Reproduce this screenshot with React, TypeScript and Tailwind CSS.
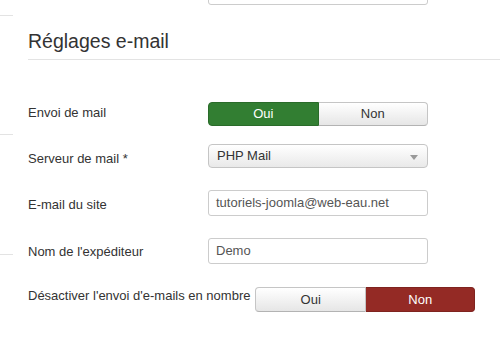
import React from "react";

const font = { fontFamily: '"Liberation Sans", Arial, sans-serif' };

function Toggle({ value }: { value: "oui" | "non" }) {
  const base = "flex-1 flex items-center justify-center text-[13px] border";
  const idle =
    "bg-gradient-to-b from-white to-[#e6e6e6] text-[#333] border-[#c5c5c5] border-b-[#b3b3b3]";
  return (
    <div className="flex w-[220px] h-[24px]">
      <div
        className={`${base} rounded-l-[4px] ${
          value === "oui" ? "bg-[#327e32] text-white border-[#2a6b2a]" : idle
        }`}
      >
        Oui
      </div>
      <div
        className={`${base} rounded-r-[4px] border-l-0 ${
          value === "non" ? "bg-[#942a25] text-white border-[#7f231f]" : idle
        }`}
      >
        Non
      </div>
    </div>
  );
}

function Row({
  label,
  pt,
  children,
}: {
  label: string;
  pt: string;
  children: React.ReactNode;
}) {
  return (
    <div className="flex items-start">
      <label className={`min-w-[175px] mr-[5px] whitespace-nowrap text-[13px] leading-[18px] text-[#333] ${pt}`}>
        {label}
      </label>
      {children}
    </div>
  );
}

export default function App() {
  return (
    <div className="w-[500px] h-[350px] bg-white overflow-hidden flex" style={font}>
      {/* sidebar edge fragments */}
      <div className="w-[14px] shrink-0 flex flex-col">
        <div className="mt-[15px] h-px bg-[#e3e3e3] w-[13px]" />
        <div className="mt-[118px] h-px bg-[#e3e3e3] w-[13px]" />
        <div className="mt-[119px] h-px bg-[#e3e3e3] w-[13px]" />
      </div>

      <div className="flex-1 pl-[14px] flex flex-col">
        {/* bottom of previous field */}
        <div className="ml-[180px] -mt-[21px] w-[220px] h-[26px] border border-[#ccc] rounded-[3px] bg-white" />

        <h2 className="mt-[22px] text-[19.5px] leading-[28px] text-[#333] border-b border-[#e3e3e3] pb-[4px]">
          Réglages e-mail
        </h2>

        <div className="mt-[42px] flex flex-col">
          <Row label="Envoi de mail" pt="pt-[2px]">
            <Toggle value="oui" />
          </Row>

          <div className="mt-[18px]">
            <Row label="Serveur de mail *" pt="pt-[6px]">
              <div className="relative w-[220px] h-[24px] border border-[#c5c5c5] rounded-[4px] bg-gradient-to-b from-white to-[#e9e9e9] flex items-center pl-[8px] text-[13px] text-[#333]">
                PHP Mail
                <span className="absolute right-[9px] top-[10px] w-0 h-0 border-l-[4px] border-r-[4px] border-t-[5px] border-l-transparent border-r-transparent border-t-[#999]" />
              </div>
            </Row>
          </div>

          <div className="mt-[22px]">
            <Row label="E-mail du site" pt="pt-[6px]">
              <div className="w-[220px] h-[26px] border border-[#ccc] rounded-[3px] bg-white flex items-center pl-[7px] text-[13px] text-[#555]">
                tutoriels-joomla@web-eau.net
              </div>
            </Row>
          </div>

          <div className="mt-[22px]">
            <Row label="Nom de l'expéditeur" pt="pt-[5px]">
              <div className="w-[220px] h-[26px] border border-[#ccc] rounded-[3px] bg-white flex items-center pl-[7px] text-[13px] text-[#555]">
                Demo
              </div>
            </Row>
          </div>

          <div className="mt-[23px]">
            <Row label="Désactiver l'envoi d'e-mails en nombre" pt="pt-0">
              <div className="flex w-[220px] h-[25px]">
                <div className="flex-1 flex items-center justify-center text-[13px] border rounded-l-[4px] bg-gradient-to-b from-white to-[#e6e6e6] text-[#333] border-[#c5c5c5] border-b-[#b3b3b3]">
                  Oui
                </div>
                <div className="flex-1 flex items-center justify-center text-[13px] border border-l-0 rounded-r-[4px] bg-[#942a25] text-white border-[#7f231f]">
                  Non
                </div>
              </div>
            </Row>
          </div>
        </div>
      </div>
    </div>
  );
}
